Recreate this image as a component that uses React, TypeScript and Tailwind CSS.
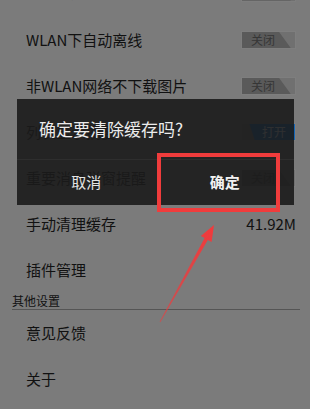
const FONT = { fontFamily: '"Noto Sans CJK SC", "Noto Sans", sans-serif' }

function OffToggle() {
  return (
    <div className="relative w-[55px] h-[18px] bg-[#707070] border border-[#7e7e7e]">
      <div className="absolute inset-0 bg-[#5a5a5a] [clip-path:polygon(0_0,70%_0,92%_100%,0_100%)]" />
      <span className="absolute left-[9px] top-0 leading-[16px] text-[12px] text-[#363636]">关闭</span>
    </div>
  )
}

function OnToggle() {
  return (
    <div className="relative w-[55px] h-[18px] bg-[#707070] border border-[#7e7e7e]">
      <div className="absolute inset-0 bg-[#1366b8] [clip-path:polygon(14%_0,100%_0,100%_100%,24%_100%)]" />
      <span className="absolute right-[9px] top-0 leading-[16px] text-[12px] text-[#dfe9f4]">打开</span>
    </div>
  )
}

function Row({ label, right, h = 'h-[46px]' }: { label: string; right?: React.ReactNode; h?: string }) {
  return (
    <div className={`${h} flex items-center justify-between pl-[26px] pr-[14px]`}>
      <span className="text-[15px] text-[#111111]">{label}</span>
      {right}
    </div>
  )
}

export default function App() {
  return (
    <div className="relative w-[310px] h-[409px] overflow-hidden bg-[#7b7b7b]" style={FONT}>
      <div className="mt-[-32px]">
        <Row label="消息推送设置" right={<OffToggle />} h="h-[49px]" />
        <Row label="WLAN下自动离线" right={<OffToggle />} />
        <Row label="非WLAN网络不下载图片" right={<OffToggle />} />
        <Row label="列表显示摘要" right={<OnToggle />} />
        <Row label="重要消息弹窗提醒" right={<OffToggle />} />
        <Row label="手动清理缓存" right={<span className="text-[15px] text-[#111111]">41.92M</span>} />
        <Row label="插件管理" />
        <div className="pl-[12px] pr-[10px] pt-[1px]">
          <div className="text-[12px] leading-[14px] text-[#111111]">其他设置</div>
          <div className="mt-[1px] h-px bg-[#555555]" />
        </div>
        <Row label="意见反馈" />
        <Row label="关于" />
      </div>

      {/* dialog */}
      <div className="absolute left-[17px] top-[99px] w-[277px] h-[106px] bg-[#1b1b1b]/[0.9] flex flex-col">
        <div className="h-[60px] flex items-center pl-[22px] text-[17px] text-[#ececec]">确定要清除缓存吗?</div>
        <div className="h-px bg-[#2e2e2e]" />
        <div className="flex-1 flex">
          <div className="flex-1 flex items-center justify-center text-[15px] text-[#e4e4e4]">取消</div>
          <div className="flex-1 flex items-center justify-center text-[15px] font-bold text-[#f2f2f2]">确定</div>
        </div>
      </div>

      {/* highlight */}
      <div className="absolute left-[157px] top-[153px] w-[123px] h-[59px] border-4 border-[#f03c3c]" />

      <svg className="absolute inset-0" width="310" height="409" viewBox="0 0 310 409">
        <defs>
          <linearGradient id="fade" x1="214" y1="225" x2="160" y2="322" gradientUnits="userSpaceOnUse">
            <stop offset="0" stopColor="#f2393b" />
            <stop offset="1" stopColor="#f2393b" stopOpacity="0.6" />
          </linearGradient>
        </defs>
        <polygon
          points="214,225 211.6,242 207.8,240 160.4,322.2 159.6,321.8 204.6,238.1 200.8,236"
          fill="url(#fade)"
        />
      </svg>
    </div>
  )
}
